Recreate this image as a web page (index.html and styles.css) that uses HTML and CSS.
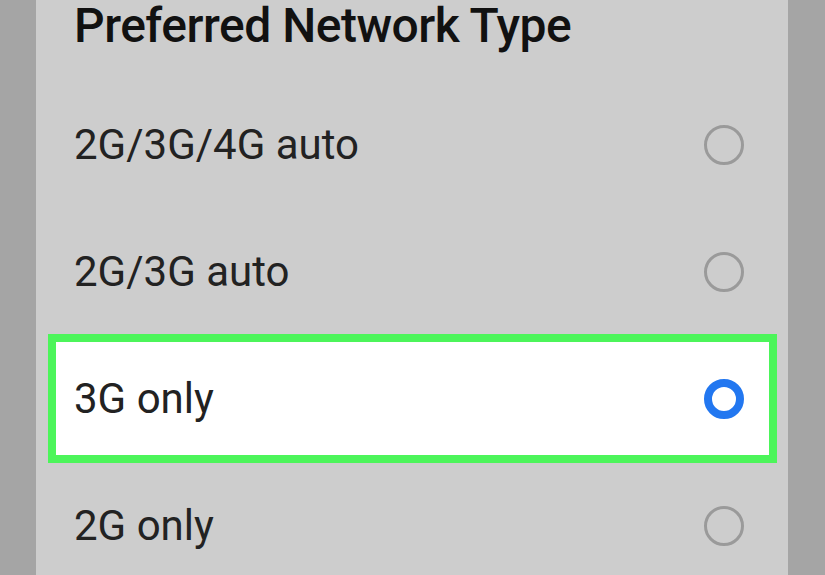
FILE: index.html
```html
<!DOCTYPE html>
<html lang="en">
<head>
  <meta charset="UTF-8">
  <meta name="viewport" content="width=device-width, initial-scale=1.0">
  <title>Preferred Network Type</title>
  <link rel="stylesheet" href="styles.css">
</head>
<body>
  <div class="dialog">
    <h1 class="dialog-title">Preferred Network Type</h1>

    <ul class="options">
      <li class="option">
        <span class="option-label">2G/3G/4G auto</span>
        <span class="radio"></span>
      </li>
      <li class="option">
        <span class="option-label">2G/3G auto</span>
        <span class="radio"></span>
      </li>
      <li class="option option-selected">
        <span class="option-label">3G only</span>
        <span class="radio radio-checked"></span>
      </li>
      <li class="option">
        <span class="option-label">2G only</span>
        <span class="radio"></span>
      </li>
    </ul>
  </div>
</body>
</html>
```

FILE: styles.css
```css
/* Reset default margin and padding */
* {
  margin: 0;
  padding: 0;
  box-sizing: border-box;
}

html,
body {
  height: 100%;
}

body {
  font-family: Roboto, 'Noto Sans', sans-serif;
  background-color: #a5a5a5;
  overflow: hidden;
}

.dialog {
  height: 100%;
  margin: 0 37px 0 36px;
  background-color: #cdcdcd;
}

.dialog-title {
  height: 81px;
  padding: 2px 0 0 38px;
  font-size: 48px;
  font-weight: 500;
  line-height: 48px;
  letter-spacing: -0.5px;
  color: #111;
}

.options {
  list-style-type: none;
}

.option {
  display: flex;
  align-items: center;
  justify-content: space-between;
  height: 127px;
  padding: 0 44px 0 38px;
}

.option-label {
  font-size: 42px;
  color: #222;
}

.option-selected {
  height: 129px;
  margin: -1px 11px -1px 12px;
  padding: 0 25px 0 18px;
  background-color: #fff;
  border: 8px solid #4cf55a;
}

.radio {
  width: 40px;
  height: 40px;
  border: 3px solid #9a9a9a;
  border-radius: 50%;
}

.radio-checked {
  border: 8px solid #2277f0;
}
```
